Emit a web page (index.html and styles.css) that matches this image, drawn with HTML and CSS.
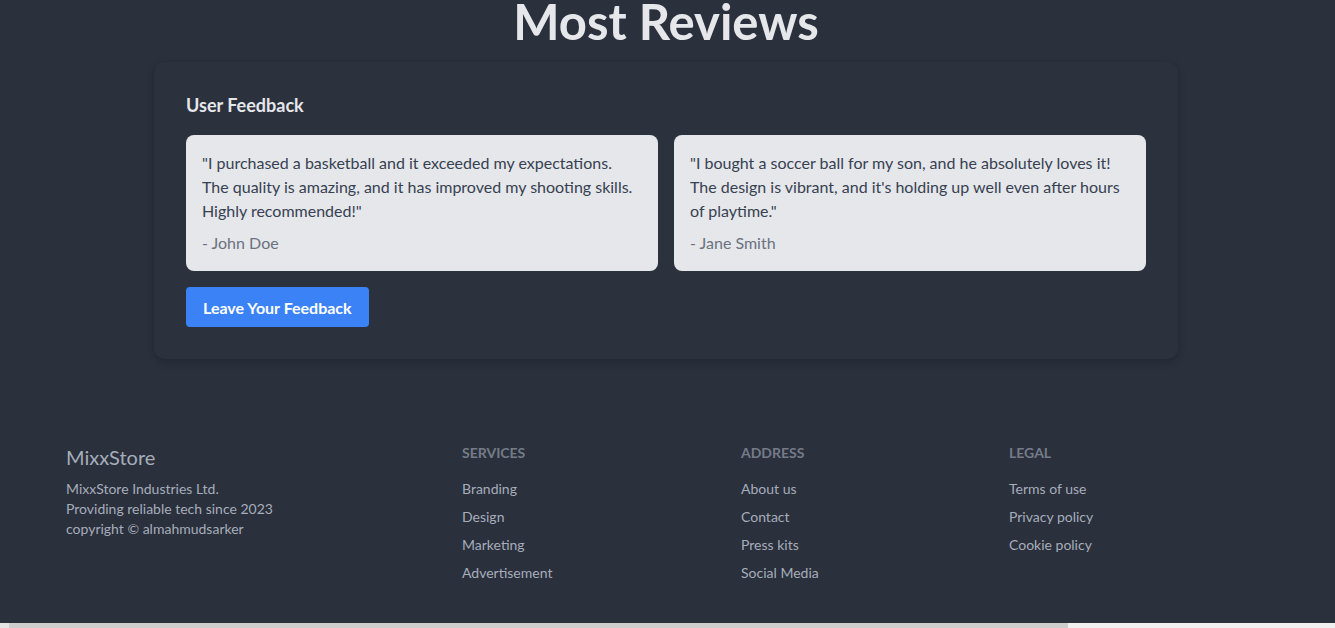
FILE: index.html
```html
<!DOCTYPE html>
<html lang="en">
<head>
<meta charset="utf-8">
<title>MixxStore - Most Reviews</title>
<link rel="stylesheet" href="styles.css">
</head>
<body>
<div class="page">
  <section class="reviews">
    <h1 class="reviews-title">Most Reviews</h1>
    <div class="card">
      <h2 class="card-title">User Feedback</h2>
      <div class="feedback-grid">
        <div class="feedback">
          <p class="feedback-text">"I purchased a basketball and it exceeded my expectations. The quality is amazing, and it has improved my shooting skills. Highly recommended!"</p>
          <p class="feedback-author">- John Doe</p>
        </div>
        <div class="feedback">
          <p class="feedback-text">"I bought a soccer ball for my son, and he absolutely loves it! The design is vibrant, and it's holding up well even after hours of playtime."</p>
          <p class="feedback-author">- Jane Smith</p>
        </div>
      </div>
      <button class="btn-primary" type="button">Leave Your Feedback</button>
    </div>
  </section>

  <footer class="footer">
    <div class="footer-col">
      <p class="brand">MixxStore</p>
      <p class="brand-info">MixxStore Industries Ltd.<br>Providing reliable tech since 2023<br>copyright © almahmudsarker</p>
    </div>
    <nav class="footer-col">
      <h6 class="footer-title">Services</h6>
      <a class="footer-link">Branding</a>
      <a class="footer-link">Design</a>
      <a class="footer-link">Marketing</a>
      <a class="footer-link">Advertisement</a>
    </nav>
    <nav class="footer-col">
      <h6 class="footer-title">Address</h6>
      <a class="footer-link">About us</a>
      <a class="footer-link">Contact</a>
      <a class="footer-link">Press kits</a>
      <a class="footer-link">Social Media</a>
    </nav>
    <nav class="footer-col">
      <h6 class="footer-title">Legal</h6>
      <a class="footer-link">Terms of use</a>
      <a class="footer-link">Privacy policy</a>
      <a class="footer-link">Cookie policy</a>
    </nav>
  </footer>
</div>
<div class="hscroll">
  <div class="hscroll-btn"></div>
  <div class="hscroll-thumb"></div>
  <div class="hscroll-track"></div>
</div>
</body>
</html>
```

FILE: styles.css
```css
* { box-sizing: border-box; }

html, body {
  margin: 0;
  padding: 0;
}

body {
  height: 628px;
  overflow: hidden;
  background: #2a303c;
  font-family: "Lato", "Open Sans", sans-serif;
  display: flex;
  flex-direction: column;
}

.page {
  flex: 1;
  display: flex;
  flex-direction: column;
  min-height: 0;
}

.reviews {
  display: flex;
  flex-direction: column;
  align-items: center;
  margin-top: -7px;
  padding-right: 3px;
}

.reviews-title {
  margin: 0;
  font-size: 49px;
  line-height: 56px;
  font-weight: 700;
  color: #e5e7eb;
}

.card {
  width: 1024px;
  margin-top: 13px;
  padding: 29px 32px 32px;
  border-radius: 10px;
  background: #2b313d;
  box-shadow: 0 3px 8px rgba(0, 0, 0, 0.14), 0 1px 2px rgba(0, 0, 0, 0.1);
  display: flex;
  flex-direction: column;
  align-items: flex-start;
}

.card-title {
  margin: 0 0 16px;
  font-size: 18px;
  line-height: 28px;
  font-weight: 700;
  color: #e5e7eb;
}

.feedback-grid {
  display: grid;
  grid-template-columns: 1fr 1fr;
  gap: 16px;
  width: 100%;
}

.feedback {
  background: #e5e7eb;
  border-radius: 8px;
  padding: 16px;
}

.feedback-text {
  margin: 0;
  font-size: 16px;
  line-height: 24px;
  color: #374151;
}

.feedback-author {
  margin: 8px 0 0;
  font-size: 16px;
  line-height: 24px;
  color: #6b7280;
}

.btn-primary {
  margin-top: 16px;
  height: 40px;
  padding: 0 17px;
  border: 0;
  border-radius: 4px;
  background: #3b82f6;
  color: #ffffff;
  font-family: inherit;
  font-size: 16px;
  font-weight: 700;
}

.footer {
  margin-top: auto;
  padding: 35px 66px 40px;
  display: grid;
  grid-template-columns: 396px 279px 268px 1fr;
  align-items: start;
  color: #a6adbb;
}

.footer-col {
  display: flex;
  flex-direction: column;
  align-items: flex-start;
  gap: 8px;
}

.brand {
  margin: 0;
  font-size: 20px;
  line-height: 28px;
}

.brand-info {
  margin: 0;
  font-size: 14px;
  line-height: 20px;
}

.footer-title {
  margin: 0 0 8px;
  font-size: 14px;
  line-height: 20px;
  font-weight: 700;
  text-transform: uppercase;
  color: #a6adbb;
  opacity: 0.6;
}

.footer-link {
  font-size: 14px;
  line-height: 20px;
  color: #a6adbb;
}

.hscroll {
  flex: none;
  height: 5px;
  display: flex;
  background: #f0f0f0;
}

.hscroll-btn {
  width: 9px;
  background: #e4e4e4;
}

.hscroll-thumb {
  width: 1059px;
  background: #cdcdcd;
}

.hscroll-track {
  flex: 1;
  background: #f0f0f0;
}
```
